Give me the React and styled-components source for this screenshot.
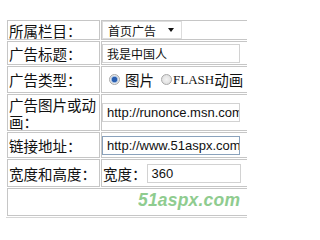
import React from 'react'
import styled, { createGlobalStyle } from 'styled-components'

const GlobalStyle = createGlobalStyle`
  html, body {
    margin: 0;
    padding: 0;
    background: #fff;
    overflow: hidden;
  }
  body {
    font-family: "Noto Sans CJK SC", "Liberation Sans", sans-serif;
  }
`

const Page = styled.div`
  width: 247px;
  height: 222px;
  overflow: hidden;
`

const Table = styled.table`
  margin: 19px 0 0 6px;
  border-collapse: separate;
  border-spacing: 1px;
  width: 300px;
  border-bottom: 1px solid #d6d6d6;
`

const Label = styled.td`
  width: 90px;
  height: ${p => p.$h}px;
  padding: 0 0 0 1px;
  border: 1px solid #c6c6c6;
  font-size: 14.5px;
  line-height: 17px;
  color: #111;
  vertical-align: middle;
  word-break: break-all;
`

const Value = styled.td`
  height: ${p => p.$h}px;
  padding: 0;
  border: 1px solid #c6c6c6;
  vertical-align: middle;
  position: relative;
`

const Select = styled.div`
  width: 80px;
  height: 18px;
  border: 1px solid #dcdcdc;
  display: flex;
  align-items: center;
  justify-content: space-between;
  padding: 0 7px 0 5px;
  box-sizing: border-box;
  font-size: 12px;
  color: #111;
`

const Arrow = styled.span`
  width: 0;
  height: 0;
  border-left: 3px solid transparent;
  border-right: 3px solid transparent;
  border-top: 4px solid #111;
`

const TextBox = styled.div`
  width: ${p => p.$w}px;
  height: 19px;
  box-sizing: border-box;
  border: 1px solid ${p => (p.$focus ? '#8aa2bc' : '#d2d2d2')};
  padding: 0 4px;
  display: flex;
  align-items: center;
  font-family: ${p => (p.$latin ? '"Liberation Sans", Arial, sans-serif' : '"Noto Sans CJK SC", sans-serif')};
  font-size: ${p => (p.$latin ? 13 : 12)}px;
  color: #111;
  white-space: nowrap;
  overflow: hidden;
`

const Radios = styled.div`
  display: flex;
  align-items: center;
  padding-left: 7px;
  font-size: 14.5px;
  color: #111;
  white-space: nowrap;
`

const Radio = styled.span`
  width: 9px;
  height: 9px;
  border-radius: 50%;
  border: 1px solid #a9a9a9;
  background: ${p => (p.$on ? 'radial-gradient(circle, #2a5fb0 0 2.5px, #9ab8e0 3px, #e8e8e8 4px)' : 'radial-gradient(circle, #f4f4f4, #d8d8d8)')};
  margin-right: ${p => (p.$on ? 5 : 1)}px;
  flex-shrink: 0;
`

const Serif = styled.span`
  font-family: "Liberation Serif", serif;
  font-size: 13px;
`

const Gap = styled.span`
  width: 7px;
`

const Inline = styled.div`
  display: flex;
  align-items: center;
  font-size: 14.5px;
  color: #111;
  padding-left: 1px;
`

const Watermark = styled.span`
  position: absolute;
  left: 130px;
  top: 1px;
  font-family: "Liberation Sans", Arial, sans-serif;
  font-weight: bold;
  font-style: italic;
  font-size: 17.5px;
  color: #7cc47c;
  opacity: 0.85;
  letter-spacing: 0.2px;
`

export default function App() {
  return (
    <Page>
      <GlobalStyle />
      <Table>
        <tbody>
          <tr>
            <Label $h={18}>所属栏目：</Label>
            <Value $h={18}>
              <Select>
                首页广告
                <Arrow />
              </Select>
            </Value>
          </tr>
          <tr>
            <Label $h={22}>广告标题：</Label>
            <Value $h={22}>
              <TextBox $w={138}>我是中国人</TextBox>
            </Value>
          </tr>
          <tr>
            <Label $h={25}>广告类型：</Label>
            <Value $h={25}>
              <Radios>
                <Radio $on />
                图片
                <Gap />
                <Radio />
                <Serif>FLASH</Serif>动画
              </Radios>
            </Value>
          </tr>
          <tr>
            <Label $h={35}>广告图片或动画：</Label>
            <Value $h={35}>
              <TextBox $w={138} $latin>http://runonce.msn.com/ie</TextBox>
            </Value>
          </tr>
          <tr>
            <Label $h={24}>链接地址：</Label>
            <Value $h={24}>
              <TextBox $w={138} $latin $focus>http://www.51aspx.com</TextBox>
            </Value>
          </tr>
          <tr>
            <Label $h={26}>宽度和高度：</Label>
            <Value $h={26}>
              <Inline>
                宽度：
                <TextBox $w={94} $latin>360</TextBox>
              </Inline>
            </Value>
          </tr>
          <tr>
            <Value $h={26} colSpan={2}>
              <Watermark>51aspx.com</Watermark>
            </Value>
          </tr>
        </tbody>
      </Table>
    </Page>
  )
}
